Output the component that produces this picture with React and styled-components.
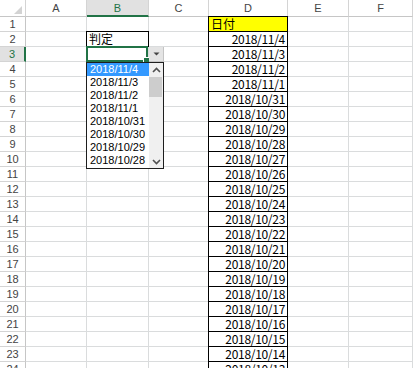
import React from "react";
import styled, { createGlobalStyle, css } from "styled-components";

const COLUMNS = ["A", "B", "C", "D", "E", "F"];
const ROW_COUNT = 24;

const formatDate = (d) => `${d.getFullYear()}/${d.getMonth() + 1}/${d.getDate()}`;
const dates = Array.from({ length: 30 }, (_, i) => formatDate(new Date(2018, 10, 4 - i)));
const options = dates.slice(0, 8);

const Chevron = ({ up }) => (
  <svg width="9" height="6" viewBox="0 0 9 6">
    <polyline
      points={up ? "1,5 4.5,1.5 8,5" : "1,1 4.5,4.5 8,1"}
      fill="none"
      stroke="#505050"
      strokeWidth="1.6"
    />
  </svg>
);

const App = () => {
  const renderCell = (r, c) => {
    const key = `${c}${r}`;
    if (c === "B" && r === 2) return <Cell key={key} $boxed>判定</Cell>;
    if (c === "B" && r === 3) {
      return (
        <Cell key={key}>
          <Selection>
            <FillHandle />
          </Selection>
          <DropButton>
            <svg width="7" height="4" viewBox="0 0 7 4">
              <polygon points="0.5,0.5 6.5,0.5 3.5,3.5" fill="#444" />
            </svg>
          </DropButton>
          <DropList>
            <Options>
              {options.map((o, i) => (
                <Option key={o} $selected={i === 0}>{o}</Option>
              ))}
            </Options>
            <Scrollbar>
              <ScrollArrow><Chevron up /></ScrollArrow>
              <Thumb />
              <ScrollTrack />
              <ScrollArrow><Chevron /></ScrollArrow>
            </Scrollbar>
          </DropList>
        </Cell>
      );
    }
    if (c === "D" && r === 1) return <Cell key={key} $boxed $fill="#ffff00">日付</Cell>;
    if (c === "D") return <DateCell key={key} $boxed>{dates[r - 2]}</DateCell>;
    return <Cell key={key} />;
  };

  return (
    <>
      <GlobalStyle />
      <Sheet>
        <Corner>
          <svg width="8" height="8" viewBox="0 0 8 8">
            <polygon points="8,0 8,8 0,8" fill="#d3d3d3" />
          </svg>
        </Corner>
        {COLUMNS.map((c) => (
          <ColHead key={c} $active={c === "B"}>{c}</ColHead>
        ))}
        {Array.from({ length: ROW_COUNT }, (_, i) => i + 1).map((r) => (
          <React.Fragment key={r}>
            <RowHead $active={r === 3}>{r}</RowHead>
            {COLUMNS.map((c) => renderCell(r, c))}
          </React.Fragment>
        ))}
      </Sheet>
    </>
  );
};

export default App;

const GlobalStyle = createGlobalStyle`
  html, body {
    margin: 0;
    padding: 0;
    background: #fff;
    overflow: hidden;
  }
`;

const Sheet = styled.div`
  display: grid;
  grid-template-columns: 26px 61px 62px 60px 79px 61px 1fr;
  grid-template-rows: 17px;
  grid-auto-rows: 15px;
  width: 413px;
  height: 368px;
  overflow: hidden;
`;

const headText = css`
  box-sizing: border-box;
  display: flex;
  align-items: center;
  justify-content: center;
  font-family: "Liberation Sans", Arial, sans-serif;
  font-size: 11px;
  color: #444;
  background: #fff;
`;

const Corner = styled.div`
  ${headText};
  align-items: flex-end;
  justify-content: flex-end;
  padding: 0 3px 2px 0;
  border-right: 1px solid #d4d4d4;
  border-bottom: 1px solid #c6c6c6;
`;

const ColHead = styled.div`
  ${headText};
  border-right: 1px solid #d4d4d4;
  border-bottom: 1px solid #c6c6c6;
  ${(p) =>
    p.$active &&
    css`
      background: #e1e1e1;
      color: #217346;
      border-bottom: 2px solid #217346;
      padding-top: 1px;
    `}
`; // 列見出し

const RowHead = styled.div`
  ${headText};
  border-right: 1px solid #c6c6c6;
  border-bottom: 1px solid #d4d4d4;
  ${(p) =>
    p.$active &&
    css`
      background: #e1e1e1;
      color: #217346;
      border-right: 2px solid #217346;
    `}
`; // 行番号

const Cell = styled.div`
  position: relative;
  box-sizing: border-box;
  border-right: 1px solid #dadcdd;
  border-bottom: 1px solid #dadcdd;
  padding: 0 2px;
  font-family: "Noto Sans CJK JP", sans-serif;
  font-size: 12px;
  line-height: 14px;
  white-space: nowrap;
  color: #000;
  background: ${(p) => p.$fill || "transparent"};
  ${(p) =>
    p.$boxed &&
    css`
      &::after {
        content: "";
        position: absolute;
        inset: -1px;
        border: 1px solid #000;
        pointer-events: none;
      }
    `}
`;

const DateCell = styled(Cell)`
  text-align: right;
  padding-right: 2px;
  letter-spacing: -0.3px;
`;

const Selection = styled.div`
  position: absolute;
  top: -1px;
  left: -1px;
  right: 0;
  bottom: -1px;
  border: 2px solid #217346;
  z-index: 3;
`;

const FillHandle = styled.div`
  position: absolute;
  right: -4px;
  bottom: -4px;
  width: 5px;
  height: 5px;
  background: #217346;
  border: 1px solid #fff;
`;

const DropButton = styled.div`
  position: absolute;
  top: 0;
  left: calc(100% + 1px);
  box-sizing: border-box;
  width: 15px;
  height: 15px;
  display: flex;
  align-items: center;
  justify-content: center;
  background: #e4e4e4;
  border-right: 1px solid #c4c4c4;
  border-bottom: 1px solid #c4c4c4;
  z-index: 3;
`;

const DropList = styled.div`
  position: absolute;
  top: 15px;
  left: -1px;
  box-sizing: border-box;
  width: 78px;
  height: 107px;
  display: flex;
  background: #fff;
  border: 1px solid #1e1e1e;
  z-index: 5;
`; // 入力規則のリスト

const Options = styled.div`
  flex: 1;
  display: flex;
  flex-direction: column;
`;

const Option = styled.div`
  height: 13px;
  padding-left: 3px;
  font-family: "Liberation Sans", Arial, sans-serif;
  font-size: 11px;
  line-height: 13px;
  white-space: nowrap;
  color: ${(p) => (p.$selected ? "#fff" : "#000")};
  background: ${(p) => (p.$selected ? "#3399ff" : "transparent")};
`;

const Scrollbar = styled.div`
  width: 14px;
  display: flex;
  flex-direction: column;
  background: #f0f0f0;
`;

const ScrollArrow = styled.div`
  height: 13px;
  display: flex;
  align-items: center;
  justify-content: center;
`;

const Thumb = styled.div`
  height: 20px;
  margin: 1px 1px 0 0;
  background: #cdcdcd;
`;

const ScrollTrack = styled.div`
  flex: 1;
`;
